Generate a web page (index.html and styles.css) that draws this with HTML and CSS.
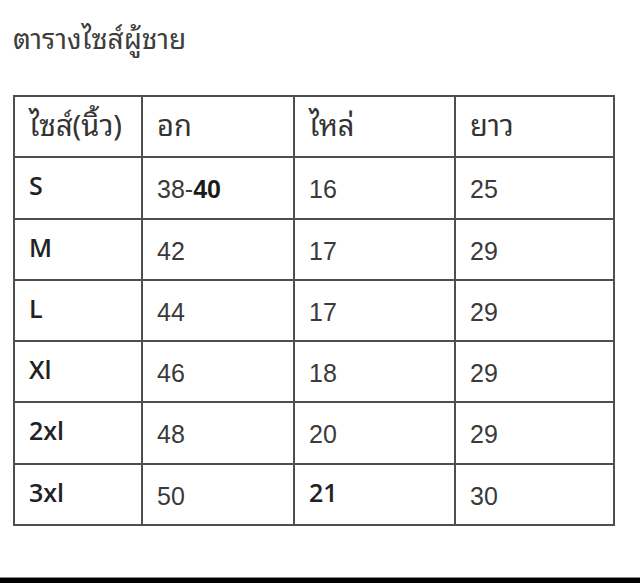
FILE: index.html
```html
<!DOCTYPE html>
<html lang="th">
<head>
<meta charset="utf-8">
<title>ตารางไซส์ผู้ชาย</title>
<link rel="stylesheet" href="styles.css">
</head>
<body>
<main class="page">
  <h1 class="title">ตารางไซส์ผู้ชาย</h1>
  <table class="size-table">
    <colgroup>
      <col class="c1"><col class="c2"><col class="c3"><col class="c4">
    </colgroup>
    <thead>
      <tr><th>ไซส์(นิ้ว)</th><th>อก</th><th>ไหล่</th><th>ยาว</th></tr>
    </thead>
    <tbody>
      <tr><td class="size">S</td><td class="num">38-<span class="strong">40</span></td><td class="num">16</td><td class="num">25</td></tr>
      <tr><td class="size">M</td><td class="num">42</td><td class="num">17</td><td class="num">29</td></tr>
      <tr><td class="size">L</td><td class="num">44</td><td class="num">17</td><td class="num">29</td></tr>
      <tr><td class="size">Xl</td><td class="num">46</td><td class="num">18</td><td class="num">29</td></tr>
      <tr><td class="size">2xl</td><td class="num">48</td><td class="num">20</td><td class="num">29</td></tr>
      <tr><td class="size">3xl</td><td class="num">50</td><td class="size">21</td><td class="num">30</td></tr>
    </tbody>
  </table>
</main>
<div class="bottom-bar"></div>
</body>
</html>
```

FILE: styles.css
```css
html, body {
  margin: 0;
  padding: 0;
  background: #ffffff;
}

body {
  height: 583px;
  display: flex;
  flex-direction: column;
  font-family: "Liberation Sans", "Noto Sans Thai Looped", "Noto Sans Thai", "Noto Sans", sans-serif;
  color: #3a3a3a;
}

.page {
  flex: 1;
  padding: 0 0 0 13px;
}

.title {
  margin: 0;
  height: 95px;
  padding-top: 17px;
  box-sizing: border-box;
  font-size: 28px;
  line-height: 40px;
  font-weight: normal;
  color: #3d3d3d;
  font-family: "Noto Sans Thai Looped", "Noto Sans Thai", "Liberation Sans", sans-serif;
}

.size-table {
  border-collapse: collapse;
  table-layout: fixed;
  width: 600px;
}

.c1 { width: 128px; }
.c2 { width: 152px; }
.c3 { width: 161px; }
.c4 { width: 159px; }

.size-table th,
.size-table td {
  border: 2px solid #4f4f4f;
  padding: 0 0 0 14px;
  text-align: left;
  vertical-align: top;
}

.size-table tr {
  height: 61.3px;
}

.size-table th {
  font-weight: normal;
  font-size: 29px;
  line-height: 34px;
  padding-top: 9px;
  color: #333;
  font-family: "Noto Sans Thai Looped", "Noto Sans Thai", "Liberation Sans", sans-serif;
}

.size {
  font-family: "Open Sans", sans-serif;
  font-weight: 600;
  font-size: 25px;
  line-height: 24px;
  padding-top: 15px !important;
  color: #222;
}

.num {
  font-size: 25px;
  line-height: 25px;
  padding-top: 19px !important;
  color: #3a3a3a;
}

.strong {
  color: #1a1a1a;
  font-weight: bold;
}

.bottom-bar {
  height: 5px;
  border-top: 1px solid #8a8a8a;
  background: #000;
}
```
